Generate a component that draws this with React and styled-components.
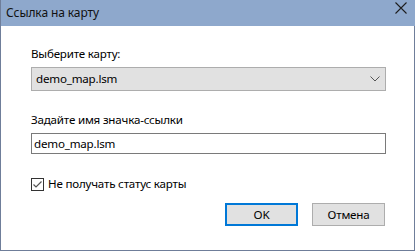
import React from "react";
import styled, { createGlobalStyle } from "styled-components";

const GlobalStyle = createGlobalStyle`
  html, body {
    margin: 0;
    padding: 0;
    background: #ffffff;
  }
  body {
    font-family: "Noto Sans", "Open Sans", sans-serif;
    font-size: 11.6px;
    letter-spacing: -0.2px;
    color: #000;
  }
`;

export default function App() {
  return (
    <>
      <GlobalStyle />
      <Window>
        <TitleBar>
          <Title>Ссылка на карту</Title>
          <CloseButton aria-label="Закрыть">
            <svg width="12" height="12" viewBox="0 0 12 12">
              <path d="M0.5 0.5 L11.5 11.5 M11.5 0.5 L0.5 11.5" stroke="#1e1e1e" strokeWidth="1.1" />
            </svg>
          </CloseButton>
        </TitleBar>
        <Body>
          <Label>Выберите карту:</Label>
          <Combo>
            <span>demo_map.lsm</span>
            <svg width="10" height="6" viewBox="0 0 10 6">
              <path d="M0.5 0.5 L5 5 L9.5 0.5" fill="none" stroke="#555" strokeWidth="1" />
            </svg>
          </Combo>
          <Label $top={21}>Задайте имя значка-ссылки</Label>
          <TextBox defaultValue="demo_map.lsm" />
          <CheckRow>
            <CheckBox>
              <svg width="13" height="13" viewBox="0 0 13 13">
                <rect x="0.5" y="0.5" width="12" height="12" fill="#fff" stroke="#333" />
                <path d="M2.5 6.5 L5 9 L10.5 3.5" fill="none" stroke="#555" strokeWidth="1.2" />
              </svg>
            </CheckBox>
            Не получать статус карты
          </CheckRow>
          <ButtonRow>
            <DialogButton $primary>OK</DialogButton>
            <DialogButton>Отмена</DialogButton>
          </ButtonRow>
        </Body>
      </Window>
    </>
  );
}

const Window = styled.div`
  width: 415px;
  height: 251px;
  box-sizing: border-box;
  border: 1px solid #6f7e9a;
  border-top: none;
  display: flex;
  flex-direction: column;
  background: #fff;
`;

const TitleBar = styled.div`
  height: 26px;
  margin: 0 -1px;
  background: #8ea8cc;
  display: flex;
  align-items: flex-start;
  justify-content: space-between;
  border-left: 1px solid #6f7e9a;
`;

const Title = styled.div`
  font-size: 12px;
  letter-spacing: -0.1px;
  line-height: 26px;
  padding-left: 5px;
  color: #111;
`;

const CloseButton = styled.div`
  width: 12px;
  height: 12px;
  margin: 2px 8px 0 0;
  display: flex;
`;

const Body = styled.div`
  flex: 1;
  padding: 20px 28px 0 30px;
  display: flex;
  flex-direction: column;
`;

const Label = styled.div`
  line-height: 16px;
  height: 16px;
  margin-top: ${(p) => (p.$top ? `${p.$top}px` : "0")};
  margin-bottom: 5px;
`;

const Combo = styled.div`
  height: 24px;
  box-sizing: border-box;
  background: #e1e1e1;
  border: 1px solid #adadad;
  display: flex;
  align-items: center;
  justify-content: space-between;
  padding: 0 5px 0 4px;
  line-height: 16px;
`;

const TextBox = styled.input`
  height: 21px;
  box-sizing: border-box;
  border: 1px solid #7a7a7a;
  padding: 0 2px;
  font: inherit;
  letter-spacing: inherit;
  color: #000;
  outline: none;
  width: 100%;
  margin: 0;
`;

const CheckRow = styled.div`
  margin-top: 22px;
  display: flex;
  align-items: center;
  gap: 4px;
  line-height: 16px;
  height: 16px;
`;

const CheckBox = styled.span`
  width: 13px;
  height: 13px;
  display: flex;
`;

const ButtonRow = styled.div`
  margin-top: 11px;
  display: flex;
  justify-content: flex-end;
  gap: 14px;
  padding-right: 1px;
`;

const DialogButton = styled.div`
  width: 73px;
  height: 23px;
  box-sizing: border-box;
  background: #e1e1e1;
  border: ${(p) => (p.$primary ? "2px solid #0078d7" : "1px solid #adadad")};
  display: flex;
  align-items: center;
  justify-content: center;
  line-height: 16px;
`;
